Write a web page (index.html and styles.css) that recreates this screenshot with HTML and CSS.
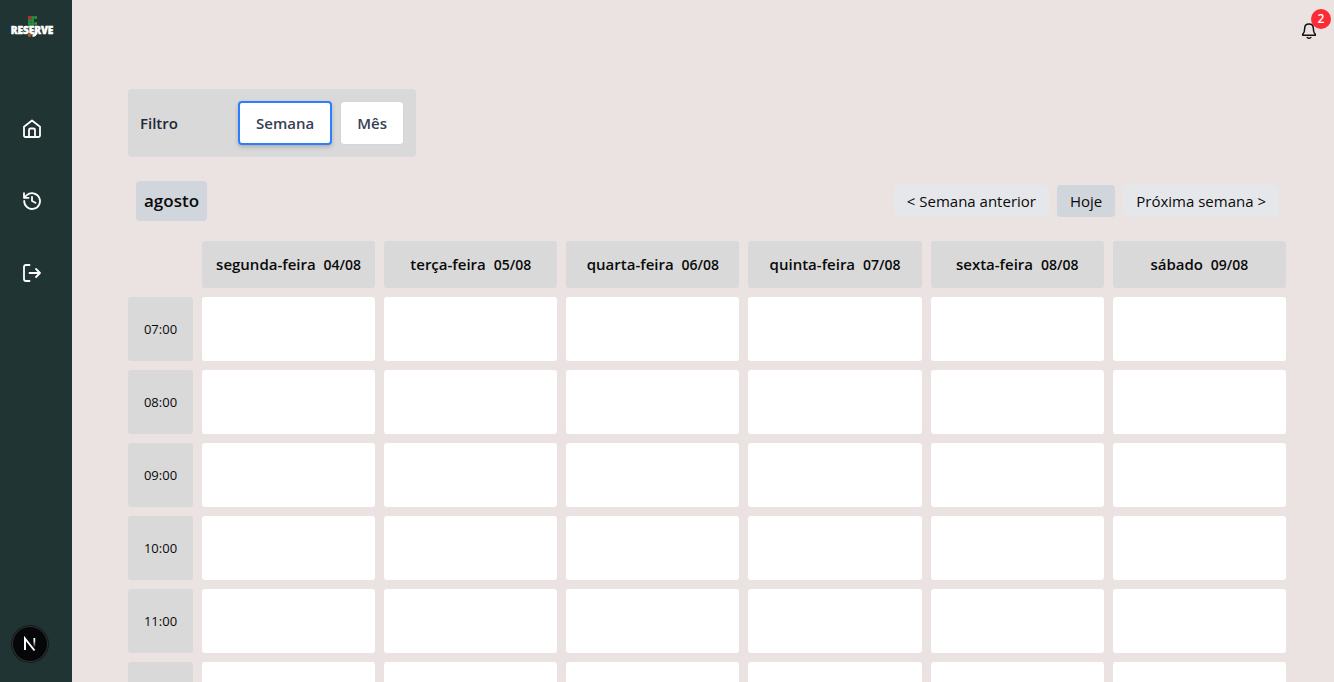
FILE: index.html
```html
<!DOCTYPE html>
<html lang="pt-BR">
<head>
<meta charset="utf-8">
<meta name="viewport" content="width=device-width, initial-scale=1">
<title>Reserve</title>
<link rel="stylesheet" href="styles.css">
</head>
<body>
<div class="app">
  <aside class="sidebar">
    <a class="logo" href="#" aria-label="Reserve">
      <svg width="44" height="24" viewBox="0 0 44 24" aria-hidden="true">
        <g fill="#2a9b3f">
          <rect x="21.200" y="1.200" width="2.700" height="2.600"/><rect x="24.300" y="1.200" width="2.700" height="2.600"/>
          <rect x="18.100" y="4.200" width="2.700" height="2.600"/><rect x="21.200" y="4.200" width="2.700" height="2.600"/>
          <rect x="18.100" y="7.200" width="2.700" height="2.600"/><rect x="21.200" y="7.200" width="2.700" height="2.600"/><rect x="24.300" y="7.200" width="2.700" height="2.600"/>
          <rect x="18.100" y="10.200" width="2.700" height="2"/><rect x="21.200" y="10.200" width="2.700" height="2"/>
        </g>
        <circle cx="19.500" cy="2.500" r="1.700" fill="#d5202c"/>
        <text class="logo-text" x="22" y="19" text-anchor="middle">RESERVE</text>
        <circle cx="19.500" cy="20" r="1.900" fill="#b5541c"/>
        <path d="M22.500 20.500q3.500.5 3.500-4" fill="none" stroke="#fff" stroke-width="2.400"/>
      </svg>
    </a>
    <nav class="nav" aria-label="Principal">
      <a href="#" aria-label="Início"><svg class="icon" viewBox="0 0 20 20"><path d="M2 7.800 10 1.500l8 6.300V16.500q0 1.500-1.500 1.500h-13Q2 18 2 16.500zM7 18v-7q0-1.500 1.500-1.500h3q1.500 0 1.500 1.500v7"/></svg></a>
      <a href="#" aria-label="Histórico"><svg class="icon" viewBox="0 0 20 20"><path d="M2.200 10a7.900 7.900 0 1 0 2.600-5.800L2 6.800M2 2.200v4.600h4.600M10 5.800V10l3.500 1.800"/></svg></a>
      <a href="#" aria-label="Sair"><svg class="icon" viewBox="0 0 20 20"><path d="M7.500 2H4Q2 2 2 4v12q0 2 2 2h3.500M7.500 10H18M14 6l4 4-4 4"/></svg></a>
    </nav>
    <button class="dev" type="button" aria-label="Ferramentas">
      <svg width="36" height="36" viewBox="0 0 36 36" aria-hidden="true">
        <defs><linearGradient id="fade" x1="0" y1="0" x2="0" y2="1"><stop offset=".3" stop-color="#fff"/><stop offset="1" stop-color="#fff" stop-opacity="0"/></linearGradient></defs>
        <path d="M13 24V12.500L22.500 24.500" fill="none" stroke="#fff" stroke-width="2"/>
        <rect x="21.500" y="12" width="1.700" height="9.500" fill="url(#fade)"/>
      </svg>
    </button>
  </aside>
  <main class="main">
    <header class="topbar">
      <button class="bell" type="button" aria-label="Notificações">
        <svg width="16" height="18" viewBox="0 0 16 18" aria-hidden="true"><path d="M8 2Q3.700 2 3.700 6.200q0 4.300-2 6.200v.8h12.600v-.8q-2-1.900-2-6.200Q12.300 2 8 2zM6.200 15.500q1.800 1.500 3.600 0" fill="none" stroke="#111" stroke-width="1.500" stroke-linejoin="round" stroke-linecap="round"/></svg>
        <span class="badge">2</span>
      </button>
    </header>
    <section class="filter" aria-label="Filtro">
      <span class="filter-title">Filtro</span>
      <div class="filter-options">
        <button class="option selected" type="button">Semana</button>
        <button class="option" type="button">Mês</button>
      </div>
    </section>
    <section class="toolbar">
      <h1 class="month">agosto</h1>
      <div class="pager">
        <button class="page" type="button">&lt; Semana anterior</button>
        <button class="page today" type="button">Hoje</button>
        <button class="page" type="button">Próxima semana &gt;</button>
      </div>
    </section>
    <table class="calendar">
      <thead>
        <tr>
          <td class="corner"></td>
          <th scope="col">segunda-feira <span class="date">04/08</span></th>
          <th scope="col">terça-feira <span class="date">05/08</span></th>
          <th scope="col">quarta-feira <span class="date">06/08</span></th>
          <th scope="col">quinta-feira <span class="date">07/08</span></th>
          <th scope="col">sexta-feira <span class="date">08/08</span></th>
          <th scope="col">sábado <span class="date">09/08</span></th>
        </tr>
      </thead>
      <tbody>
        <tr><th scope="row">07:00</th><td></td><td></td><td></td><td></td><td></td><td></td></tr>
        <tr><th scope="row">08:00</th><td></td><td></td><td></td><td></td><td></td><td></td></tr>
        <tr><th scope="row">09:00</th><td></td><td></td><td></td><td></td><td></td><td></td></tr>
        <tr><th scope="row">10:00</th><td></td><td></td><td></td><td></td><td></td><td></td></tr>
        <tr><th scope="row">11:00</th><td></td><td></td><td></td><td></td><td></td><td></td></tr>
        <tr><th scope="row"></th><td></td><td></td><td></td><td></td><td></td><td></td></tr>
      </tbody>
    </table>
  </main>
</div>
</body>
</html>
```
FILE: styles.css
```css
* { box-sizing: border-box; }

body {
  margin: 0;
  background: #ebe3e1;
  color: #0a0a0a;
  font: 15px/24px "Open Sans", "Noto Sans", sans-serif;
}

button {
  border: 0;
  font: inherit;
  color: inherit;
  cursor: pointer;
}

.app {
  display: flex;
  height: 100vh;
  overflow: hidden;
}

.sidebar {
  display: flex;
  flex-direction: column;
  flex: 0 0 72px;
  padding: 15px 10px 20px;
  background: #1f3433;
}

.logo { height: 24px; }
.logo svg { display: block; }

.logo-text {
  font: 800 10px "Open Sans", sans-serif;
  fill: #fff;
  stroke: #fff;
  stroke-width: 0.5;
}

.nav {
  display: flex;
  flex-direction: column;
  gap: 52px;
  padding: 80px 12px 0;
}

.nav a { height: 20px; }

.icon {
  display: block;
  width: 20px;
  height: 20px;
  fill: none;
  stroke: #fff;
  stroke-width: 1.8;
  stroke-linecap: round;
  stroke-linejoin: round;
}

.dev {
  width: 36px;
  height: 36px;
  margin: auto 0 0 2px;
  padding: 0;
  border-radius: 50%;
  background: #050708;
  box-shadow: inset 0 0 0 1px #303333, 0 0 0 1px #141b1b;
}

.dev svg { display: block; }

.main {
  flex: 1;
  min-width: 0;
  padding-left: 47px;
}

.topbar {
  display: flex;
  justify-content: flex-end;
  height: 89px;
  padding: 22px 17px 0 0;
}

.bell {
  position: relative;
  width: 16px;
  height: 18px;
  padding: 0;
  background: none;
}

.bell svg { display: block; }

.badge {
  position: absolute;
  top: -13px;
  right: -14px;
  width: 20px;
  height: 20px;
  border-radius: 50%;
  background: #fb2c36;
  color: #fff;
  font-size: 12px;
  font-weight: 600;
  line-height: 20px;
}

.filter {
  display: flex;
  align-items: center;
  justify-content: space-between;
  width: 288px;
  margin-left: 9px;
  padding: 12px;
  border-radius: 4px;
  background: #d9d9d9;
  color: #1e2939;
  font-weight: 600;
}

.filter-options {
  display: flex;
  align-items: flex-start;
  gap: 8px;
}

.option {
  padding: 9px 16px;
  border: 1px solid #d1d5dc;
  border-radius: 4px;
  background: #fff;
  color: #364153;
}

.selected {
  padding: 8px 16px;
  border: 2px solid #2b7fff;
  box-shadow: 0 2px 4px #0003;
}

.toolbar {
  display: flex;
  align-items: center;
  justify-content: space-between;
  padding: 24px 55px 11px 17px;
}

.month {
  margin: 0;
  padding: 8px;
  border-radius: 4px;
  background: #d1d5dc;
  font-size: 17px;
  font-weight: 600;
  line-height: 24px;
}

.pager {
  display: flex;
  gap: 8px;
}

.page {
  padding: 4px 13px;
  border-radius: 4px;
  background: #e5e7eb;
}

.today { background: #d1d5dc; }

.calendar {
  width: calc(100% - 39px);
  table-layout: fixed;
  border-collapse: separate;
  border-spacing: 9px;
}

.calendar th,
.calendar td {
  height: 64px;
  padding: 0;
  border-radius: 3px;
}

.calendar td { background: #fff; }

.calendar th {
  background: #d9d9d9;
  font-weight: 600;
  white-space: nowrap;
}

.calendar thead th { height: 47px; }

.calendar .corner {
  width: 65px;
  height: 47px;
  background: none;
}

.calendar tbody th {
  font-size: 13px;
  font-weight: 400;
}

.date {
  margin-left: 4px;
  font-size: 14px;
}
```
